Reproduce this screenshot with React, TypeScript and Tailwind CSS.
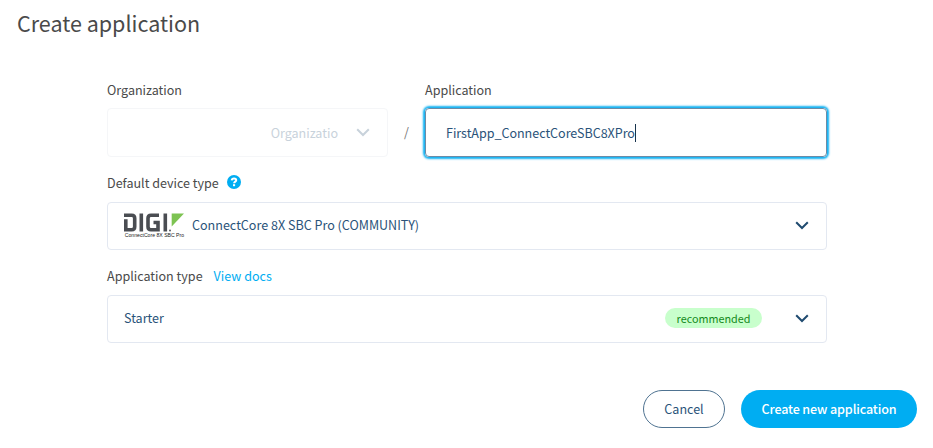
import React from "react";

function Chevron({ className = "" }: { className?: string }) {
  return (
    <svg width="14" height="9" viewBox="0 0 14 9" fill="none" className={className}>
      <path d="M1.2 1.2 7 7l5.8-5.8" stroke="currentColor" strokeWidth="2" />
    </svg>
  );
}

function DigiLogo() {
  return (
    <svg width="62" height="28" viewBox="0 0 62 28">
      <g fill="none" stroke="#4a4d52" strokeWidth="3.6">
        <path d="M0 3.3H7.7Q10.7 3.3 10.7 6.3V14.7Q10.7 17.7 7.7 17.7H1.8V7.3" />
        <path d="M17.3 1.5V19.5" />
        <path d="M35 3.3H27Q24 3.3 24 6.3V14.7Q24 17.7 27 17.7H34V10.5H29.5" />
        <path d="M41.3 1.5V19.5" />
      </g>
      <path d="M47.7 1.5H60L47.7 14.5Z" fill="#7dc352" />
      <circle cx="46" cy="18.5" r="0.9" fill="#4a4d52" />
      <text x="0.8" y="25" fontSize="5.2" textLength="59.3" lengthAdjust="spacingAndGlyphs" fill="#222" className="font-['Liberation_Sans',sans-serif]">
        ConnectCore 8X SBC Pro
      </text>
    </svg>
  );
}

export default function App() {
  return (
    <main className="h-[448px] w-[933px] overflow-hidden bg-white pt-2 font-['Noto_Sans_CJK_SC',sans-serif] text-[12.55px] leading-5 text-[#4a4a4a]">
      <h1 className="pl-[17px] text-[21.5px] leading-[30px]">Create application</h1>

      <form className="ml-[107px] mt-[42px] w-[720px]">
        <div className="flex">
          <div className="w-[281px]">
            <label className="block">Organization</label>
            <div className="mt-2 flex h-[49px] items-center justify-end rounded-[4px] border border-[#f5f6f8] pr-[17px] text-[#c8d2db]">
              <span>Organizatio</span>
              <Chevron className="ml-[18px]" />
            </div>
          </div>
          <span className="mt-[42px] w-[37px] text-center text-[#777]">/</span>
          <div className="w-[402px]">
            <label className="block">Application</label>
            <div className="mt-2 flex h-[49px] items-center rounded-[4px] border border-[#6c8ba6] pl-[20px] text-[#2a5379] shadow-[0_0_2px_2px_#13b2f2]">
              <span className="tracking-[-0.03px]">FirstApp_ConnectCoreSBC8XPro</span>
              <span className="h-[18px] w-px bg-[#17334d]" />
            </div>
          </div>
        </div>

        <div className="mt-4 flex items-center">
          <label>Default device type</label>
          <span className="mb-[3px] ml-2 flex size-[14px] items-center justify-center rounded-full bg-[#00adf2]">
            <svg width="14" height="14" viewBox="0 0 14 14" fill="none">
              <path d="M4.7 5.4C4.9 4 5.9 3.5 7 3.5c1.2 0 2.2.6 2.2 1.7 0 1.4-2.1 1.4-2.1 3.1" stroke="white" strokeWidth="2" />
              <path d="M6 9.2h2.1v2H6z" fill="white" />
            </svg>
          </span>
        </div>
        <div className="mt-[9px] flex h-12 items-center rounded-[4px] border border-[#e3e8f1] pl-4 pr-[17px] text-[#2a5379]">
          <DigiLogo />
          <span className="mb-[2px] ml-[6px]">ConnectCore 8X SBC Pro (COMMUNITY)</span>
          <Chevron className="mb-px ml-auto text-[#204b70]" />
        </div>

        <div className="mt-4 flex">
          <label>Application type</label>
          <a className="ml-[11px] text-[#00adf2]">View docs</a>
        </div>
        <div className="mt-[9px] flex h-12 items-center rounded-[4px] border border-[#e3e8f1] pl-4 pr-[17px] text-[#2a5379]">
          <span className="mb-[2px]">Starter</span>
          <span className="mb-[2px] ml-auto flex h-5 w-[97px] items-center justify-center rounded-full bg-[#c8ffcc] text-[10.8px] text-[#138a1b]">recommended</span>
          <Chevron className="mb-px ml-[33px] text-[#204b70]" />
        </div>
      </form>

      <div className="mt-[47px] flex justify-end gap-4 pr-4">
        <button className="h-[38px] w-[82px] rounded-full border border-[#4f7391] text-[#2a5379]">Cancel</button>
        <button className="h-[38px] w-[176px] rounded-full bg-[#00adf2] font-medium tracking-[-0.13px] text-white">Create new application</button>
      </div>
    </main>
  );
}
